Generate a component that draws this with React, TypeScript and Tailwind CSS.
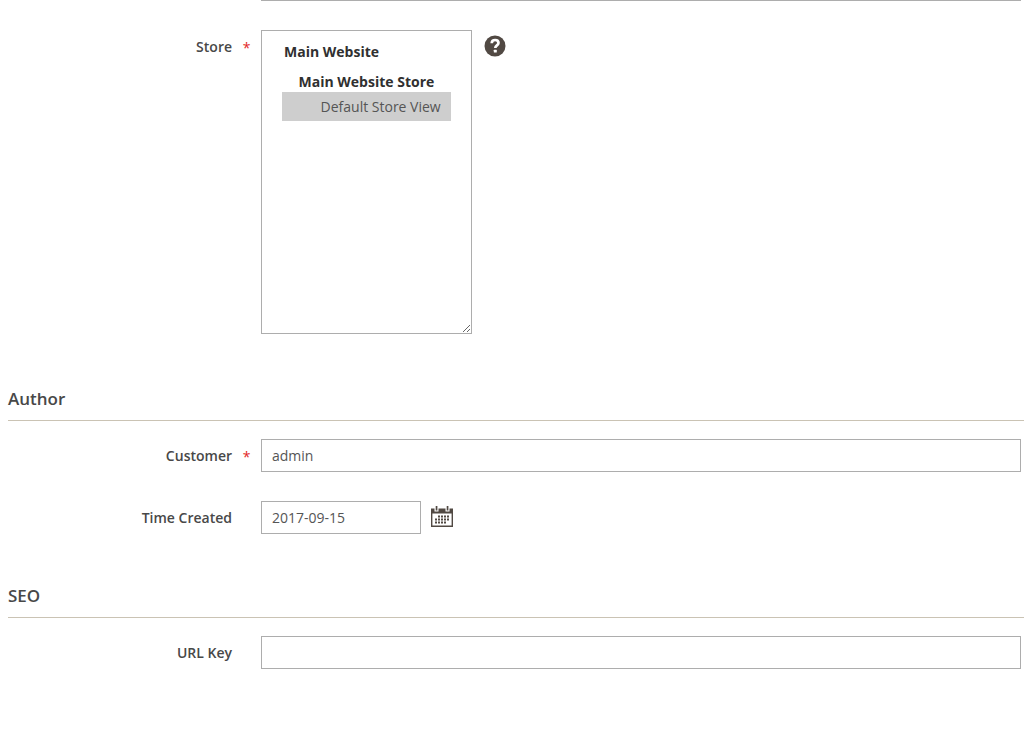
import React from 'react';

interface FieldProps {
  id: string;
  label: string;
  required?: boolean;
  children: React.ReactNode;
}

const inputClass =
  'h-[33px] border border-[#adadad] bg-white px-2.5 text-sm text-[#555555] outline-none focus:border-[#007bdb]';

const Field: React.FC<FieldProps> = ({ id, label, required, children }) => (
  <div className="flex items-start">
    <label
      htmlFor={id}
      className="flex h-[34px] w-[232px] shrink-0 items-center justify-end text-sm font-semibold text-[#484848]"
    >
      {label}
    </label>
    <span className="flex h-9 w-[29px] shrink-0 items-center justify-center text-sm text-[#e22626]">
      {required && <span aria-hidden="true">*</span>}
    </span>
    <div className="flex min-w-0 flex-1 items-start pr-[3px]">{children}</div>
  </div>
);

const SectionTitle: React.FC<{ children: React.ReactNode }> = ({ children }) => (
  <h2 className="ml-2 border-b border-[#cac3b4] pb-[9px] text-[17px] leading-6 font-semibold text-[#484848]">
    {children}
  </h2>
);

const HelpIcon = () => (
  <svg width="22" height="22" viewBox="0 0 22 22" aria-hidden="true">
    <circle cx="11" cy="11" r="10.5" fill="#514943" />
    <path
      d="M7.7 8.2C7.8 6 9.2 5 11.1 5c2 0 3.4 1.1 3.4 2.9 0 2.4-3.2 2.5-3.2 5"
      fill="none"
      stroke="#fff"
      strokeWidth="2.7"
    />
    <rect x="9.8" y="14.7" width="3" height="2.8" rx="0.6" fill="#fff" />
  </svg>
);

const CalendarIcon = () => (
  <svg width="22" height="22" viewBox="0 0 22 22" aria-hidden="true">
    <path d="M0.7 3.2h20.6v17.1H0.7z" fill="#fff" stroke="#514943" strokeWidth="1.4" />
    <path d="M0 3h22v4.5H0z" fill="#514943" />
    <path d="M3.5 0h4v5.5h-4zM14.5 0h4v5.5h-4z" fill="#fff" />
    <path d="M4.7 0h1.7v4.5H4.7zM15.7 0h1.7v4.5h-1.7z" fill="#514943" />
    <path
      d="M7 10.5h11M4 13.5h14M4 16.5h11"
      stroke="#514943"
      strokeWidth="2"
      strokeDasharray="2 1"
    />
  </svg>
);

const App: React.FC = () => {
  return (
    <form className="bg-white pb-20 font-['Open_Sans','Noto_Sans',sans-serif]">
      <div className="mr-[3px] ml-[261px] border-b border-[#adadad]" />

      <div className="mt-[29px]">
        <Field id="store" label="Store" required>
          <select
            id="store"
            multiple
            defaultValue={['default']}
            className="h-[304px] w-[211px] resize overflow-auto border border-[#adadad] bg-white px-5 py-[11px] text-sm text-[#303030] outline-none"
          >
            <optgroup label="Main Website" className="mb-2.5 font-bold" />
            <optgroup label={'\u00a0\u00a0\u00a0\u00a0Main Website Store'} className="font-bold">
              <option value="default" className="py-[5px] pl-6 font-normal text-[#555555]">
                {'\u00a0\u00a0\u00a0\u00a0Default Store View'}
              </option>
            </optgroup>
          </select>
          <button type="button" aria-label="Help" className="mt-[5px] ml-3">
            <HelpIcon />
          </button>
        </Field>
      </div>

      <section className="mt-[53px]">
        <SectionTitle>Author</SectionTitle>
        <div className="mt-[18px] flex flex-col gap-[26px]">
          <Field id="customer" label="Customer" required>
            <input id="customer" type="text" defaultValue="admin" className={`${inputClass} w-full`} />
          </Field>
          <Field id="created" label="Time Created">
            <input id="created" type="text" defaultValue="2017-09-15" className={`${inputClass} w-40`} />
            <button type="button" aria-label="Pick a date" className="mt-[5px] ml-2.5">
              <CalendarIcon />
            </button>
          </Field>
        </div>
      </section>

      <section className="mt-[47px]">
        <SectionTitle>SEO</SectionTitle>
        <div className="mt-[18px]">
          <Field id="url-key" label="URL Key">
            <input id="url-key" type="text" className={`${inputClass} w-full`} />
          </Field>
        </div>
      </section>
    </form>
  );
};

export default App;
